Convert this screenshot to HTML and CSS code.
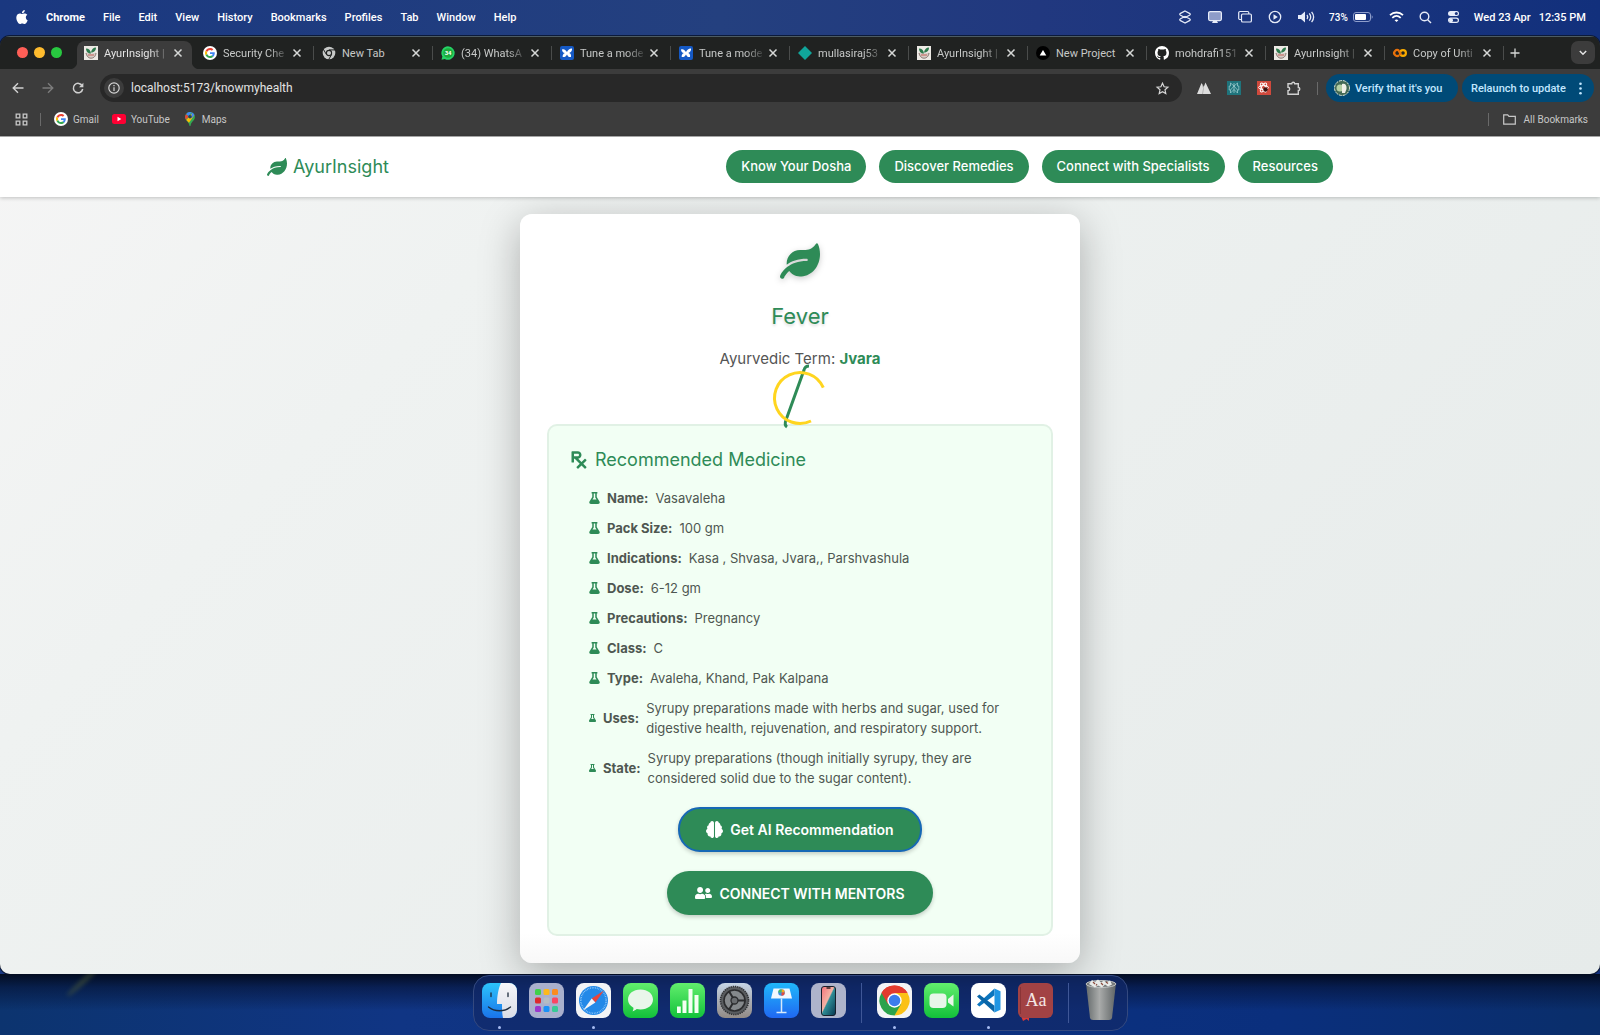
FILE: index.html
```html
<!DOCTYPE html>
<html lang="en">
<head>
<meta charset="utf-8">
<title>AyurInsight | Know My Health</title>
<link rel="stylesheet" href="styles.css">
</head>
<body>
<svg class="defs" aria-hidden="true">
  <symbol id="leaf" viewBox="0 0 576 512"><path d="M546.2 9.7c-5.6-12.5-21.6-13-28.3-1.2C486.9 62.4 431.4 96 368 96h-80C182 96 96 182 96 288c0 7 .8 13.7 1.5 20.5C161.3 262.8 253.4 224 384 224c8.8 0 16 7.2 16 16s-7.2 16-16 16C132.6 256 26 410.1 2.4 468c-6.6 16.3 1.2 34.9 17.5 41.6 16.4 6.8 35-1.1 41.8-17.3 1.5-3.6 20.9-47.9 71.9-90.6 32.4 43.9 94 85.8 174.9 77.2C465.5 467.5 576 326.7 576 154.3c0-50.2-10.8-102.2-29.8-144.6z"/></symbol>
  <symbol id="flask" viewBox="0 0 448 512"><path d="M437.2 403.5L320 215V64h8c13.3 0 24-10.7 24-24V24c0-13.3-10.7-24-24-24H120c-13.3 0-24 10.7-24 24v16c0 13.3 10.7 24 24 24h8v151L10.8 403.5C-18.5 450.6 15.3 512 70.9 512h306.2c55.7 0 89.4-61.5 60.1-108.5zM137.9 320l48.2-77.6c3.7-5.2 5.8-11.6 5.8-18.4V64h64v160c0 6.9 2.2 13.2 5.8 18.4l48.2 77.6h-172z"/></symbol>
  <symbol id="close" viewBox="0 0 10 10"><path d="M1.5 1.5l7 7M8.5 1.5l-7 7" fill="none" stroke="currentColor" stroke-width="1.5"/></symbol>
  <symbol id="google" viewBox="0 0 28 28"><circle cx="14" cy="14" r="14" fill="#fff"/><g transform="translate(4 4) scale(.417)"><path fill="#ea4335" d="M24 9.500c3.540 0 6.710 1.220 9.210 3.600l6.850-6.850C35.900 2.380 30.470 0 24 0 14.620 0 6.510 5.380 2.560 13.220l7.980 6.190C12.430 13.720 17.740 9.500 24 9.500z"/><path fill="#4285f4" d="M46.980 24.550c0-1.570-.15-3.090-.38-4.550H24v9.020h12.940c-.58 2.960-2.260 5.480-4.780 7.180l7.730 6c4.510-4.180 7.090-10.360 7.090-17.650z"/><path fill="#fbbc05" d="M10.530 28.590c-.48-1.450-.76-2.990-.76-4.590s.27-3.140.76-4.590l-7.980-6.190C.92 16.460 0 20.120 0 24c0 3.880.92 7.540 2.560 10.780l7.970-6.190z"/><path fill="#34a853" d="M24 48c6.480 0 11.930-2.130 15.890-5.810l-7.730-6c-2.150 1.450-4.920 2.300-8.160 2.300-6.260 0-11.570-4.220-13.470-9.910l-7.980 6.190C6.510 42.620 14.620 48 24 48z"/></g></symbol>
  <symbol id="ayur" viewBox="0 0 14 14"><path fill="#ece9e4" d="M0 0h14v14H0z"/><path d="M2 6.500c0 3 2 5.700 5 5.700s5-2.700 5-5.700l-4 1z" fill="#d5cbc6"/><path d="M2 7c1 4 3 5.200 5 5.200S11.500 11 12 7" fill="none" stroke="#7d6660" stroke-width=".9"/><path d="M2 2.500c3 0 4.500 1.500 5 5C4 7.500 2 5.500 2 2.500zM12 1.500c-3 0-4.500 2-5 5 3 0 5-1.500 5-5z" fill="#2d7a4c"/><path d="M4 9h6" stroke="#c0473c" stroke-width=".8"/></symbol>
  <symbol id="tune" viewBox="0 0 14 14"><rect width="14" height="14" rx="2" fill="#1559c5"/><path d="M2 3.500c2-1 3.500.3 5 2.500 1.200-2.500 3-3.800 5-3.500.3 2-.8 4-2.800 4.500 1.600.5 2.200 2 1.800 4-2 .5-3.200-.8-4-2.600-.8 1.800-2.400 3-4.300 2.600C2.500 9 3.300 7.500 5 7 3.200 6.800 2 5.500 2 3.500z" fill="#fff"/></symbol>
</svg>

<header class="menubar">
  <nav class="menus" aria-label="Application menu">
    <button aria-label="Apple menu"><svg width="12" height="14" viewBox="2 0 20 24" fill="#fff"><path d="M12.152 6.896c-.948 0-2.415-1.078-3.960-1.040-2.040.027-3.910 1.183-4.961 3.014-2.117 3.675-.546 9.103 1.519 12.090 1.013 1.454 2.208 3.090 3.792 3.039 1.520-.065 2.090-.987 3.935-.987 1.831 0 2.350.987 3.960.948 1.637-.026 2.676-1.480 3.676-2.948 1.156-1.688 1.636-3.325 1.662-3.415-.039-.013-3.182-1.221-3.220-4.857-.026-3.040 2.480-4.494 2.597-4.559-1.429-2.090-3.623-2.324-4.390-2.376-2-.156-3.675 1.090-4.610 1.090zM15.530 3.830c.843-1.012 1.400-2.427 1.245-3.830-1.207.052-2.662.805-3.532 1.818-.78.896-1.454 2.338-1.273 3.714 1.338.104 2.715-.688 3.559-1.701"/></svg></button>
    <button class="app-name">Chrome</button><button>File</button><button>Edit</button><button>View</button><button>History</button><button>Bookmarks</button><button>Profiles</button><button>Tab</button><button>Window</button><button>Help</button>
  </nav>
  <div class="status">
    <div class="status-icons wide">
      <svg width="14" height="14" viewBox="0 0 14 14"><path d="M7 1l4.500 2.300c1 .6 1 1.400 0 2L7 7.600 2.500 5.300c-1-.6-1-1.400 0-2zM7 13l-4.500-2.300c-1-.6-1-1.400 0-2L7 6.400l4.500 2.300c1 .6 1 1.400 0 2z" fill="none" stroke="#e6ebf8" stroke-width="1.300"/></svg>
      <svg width="14" height="14" viewBox="0 0 14 14"><rect x=".6" y="1.600" width="12.800" height="9" rx="1.500" fill="#8e9cc9" stroke="#e6ebf8" stroke-width="1.200"/><path d="M4 13h6l-1-2H5z" fill="#e6ebf8"/></svg>
      <svg width="14" height="14" viewBox="0 0 14 14" fill="none" stroke="#e6ebf8" stroke-width="1.200"><path d="M3.500 9.500H2A1.300 1.300 0 0 1 .7 8.200V2.800A1.300 1.300 0 0 1 2 1.500h7.500a1.300 1.300 0 0 1 1.300 1.300V4"/><rect x="3.500" y="4" width="9.900" height="8" rx="1.300"/></svg>
      <svg width="14" height="14" viewBox="0 0 14 14"><circle cx="7" cy="7" r="5.700" fill="none" stroke="#e6ebf8" stroke-width="1.300"/><path d="M5.500 4.300L9.800 7l-4.300 2.700z" fill="#e6ebf8"/></svg>
      <svg class="speaker" width="17" height="14" viewBox="0 0 17 14"><path d="M0 5h3l4-3.500v11L3 9H0z" fill="#e6ebf8"/><path d="M9 5c.9 1.200.9 2.800 0 4M11.300 3.300c1.700 2.200 1.700 5.200 0 7.400M13.600 1.800c2.500 3.200 2.500 7.200 0 10.400" fill="none" stroke="#e6ebf8" stroke-width="1.300"/></svg>
    </div>
    <div class="battery"><span>73%</span><svg width="20" height="10" viewBox="0 0 20 10"><rect x=".5" y=".5" width="17" height="9" rx="2.500" fill="none" stroke="#8f9ecb"/><rect x="2" y="2" width="11" height="6" rx="1" fill="#fff"/><path d="M18.700 3.300v3.400c1.300-.6 1.300-2.800 0-3.400z" fill="#8f9ecb"/></svg></div>
    <div class="status-icons">
      <svg width="15" height="12" viewBox="0 0 15 12" fill="none" stroke="#fff" stroke-width="1.800"><path d="M1 4.200c3.800-3.600 9.200-3.600 13 0M3.300 6.800c2.500-2.300 5.900-2.300 8.400 0"/><path d="M5.600 9.200c1.200-1 2.600-1 3.800 0L7.500 11z" fill="#fff" stroke="none"/></svg>
      <svg width="13" height="13" viewBox="0 0 13 13" fill="none" stroke="#e6ebf8" stroke-width="1.400"><circle cx="5.500" cy="5.500" r="4.300"/><path d="M8.700 8.700L12 12"/></svg>
      <svg width="13" height="14" viewBox="0 0 13 14"><rect x="1" y="1" width="11" height="5" rx="2.500" fill="#e6ebf8"/><circle cx="9.300" cy="3.500" r="1.500" fill="#1b347f"/><rect x="1.600" y="8.100" width="9.800" height="4.300" rx="2.100" fill="none" stroke="#e6ebf8" stroke-width="1.200"/><circle cx="4" cy="10.200" r="2" fill="#e6ebf8"/></svg>
    </div>
    <div class="clock"><span>Wed 23 Apr</span><time>12:35 PM</time></div>
  </div>
</header>

<div class="window">
  <div class="tabstrip">
    <div class="lights"><button class="red" aria-label="Close window"></button><button class="amber" aria-label="Minimise"></button><button class="green" aria-label="Zoom"></button></div>
    <div class="tabs">
      <div class="tab active"><svg class="fav"><use href="#ayur"/></svg><span>AyurInsight |</span><button aria-label="Close tab"><svg><use href="#close"/></svg></button></div>
      <div class="tab"><svg class="fav"><use href="#google"/></svg><span>Security Che</span><button aria-label="Close tab"><svg><use href="#close"/></svg></button></div>
      <div class="tab short"><svg class="fav" viewBox="0 0 14 14"><circle cx="7" cy="7" r="6.300" fill="#c7c9c8"/><circle cx="7" cy="7" r="2.600" fill="#c7c9c8" stroke="#202221" stroke-width="1.100"/><path d="M7 3.900h6M4.400 8.500l-3-5.200M9.600 8.500l-3 5.200" stroke="#202221" stroke-width="1"/></svg><span>New Tab</span><button aria-label="Close tab"><svg><use href="#close"/></svg></button></div>
      <div class="tab"><svg class="fav" viewBox="0 0 14 14"><path d="M7 .3a6.700 6.700 0 1 1-3.200 12.600L.5 13.700l.9-3.200A6.700 6.700 0 0 1 7 .3z" fill="#25d366"/><circle cx="7.100" cy="7" r="4.800" fill="#1cab3c"/><text x="7.100" y="9.200" font-size="6" font-weight="700" fill="#fff" text-anchor="middle">34</text></svg><span>(34) WhatsA</span><button aria-label="Close tab"><svg><use href="#close"/></svg></button></div>
      <div class="tab"><svg class="fav"><use href="#tune"/></svg><span>Tune a mode</span><button aria-label="Close tab"><svg><use href="#close"/></svg></button></div>
      <div class="tab"><svg class="fav"><use href="#tune"/></svg><span>Tune a mode</span><button aria-label="Close tab"><svg><use href="#close"/></svg></button></div>
      <div class="tab"><svg class="fav" viewBox="0 0 14 14"><path d="M7 0l7 7-7 7-7-7z" fill="#10a59b"/></svg><span>mullasiraj53</span><button aria-label="Close tab"><svg><use href="#close"/></svg></button></div>
      <div class="tab"><svg class="fav"><use href="#ayur"/></svg><span>AyurInsight |</span><button aria-label="Close tab"><svg><use href="#close"/></svg></button></div>
      <div class="tab short"><svg class="fav" viewBox="0 0 14 14"><circle cx="7" cy="7" r="7" fill="#000"/><path d="M7 4l3.300 5.500H3.700z" fill="#fff"/></svg><span>New Project</span><button aria-label="Close tab"><svg><use href="#close"/></svg></button></div>
      <div class="tab"><svg class="fav" viewBox="0 0 16 16"><path fill="#fff" d="M8 0C3.580 0 0 3.580 0 8c0 3.540 2.290 6.530 5.470 7.590.4.070.55-.17.55-.38 0-.19-.01-.82-.01-1.490-2.010.37-2.530-.49-2.690-.94-.09-.23-.48-.94-.82-1.130-.28-.15-.68-.52-.01-.53.63-.01 1.080.58 1.230.82.72 1.210 1.870.87 2.330.66.07-.52.28-.87.51-1.070-1.780-.2-3.640-.89-3.640-3.950 0-.87.31-1.590.82-2.150-.08-.2-.36-1.020.08-2.120 0 0 .67-.21 2.200.82.64-.18 1.320-.27 2-.27s1.360.09 2 .27c1.530-1.040 2.200-.82 2.200-.82.44 1.100.16 1.920.08 2.120.51.56.82 1.270.82 2.150 0 3.070-1.870 3.750-3.650 3.950.29.25.54.73.54 1.480 0 1.070-.01 1.930-.01 2.200 0 .21.15.46.55.38A8.010 8.010 0 0 0 16 8c0-4.420-3.580-8-8-8z"/></svg><span>mohdrafi151</span><button aria-label="Close tab"><svg><use href="#close"/></svg></button></div>
      <div class="tab"><svg class="fav"><use href="#ayur"/></svg><span>AyurInsight |</span><button aria-label="Close tab"><svg><use href="#close"/></svg></button></div>
      <div class="tab"><svg class="fav" viewBox="0 0 14 14" fill="none" stroke-width="2.200"><circle cx="10" cy="7" r="2.900" stroke="#f9ab00"/><path d="M6.100 4.900A2.900 2.900 0 1 0 6.100 9.100" stroke="#e8710a"/><path d="M5.900 4.800l2 4.300" stroke="#e8710a"/></svg><span>Copy of Unti</span><button aria-label="Close tab"><svg><use href="#close"/></svg></button></div>
    </div>
    <button class="new-tab" aria-label="New tab"><svg width="10" height="10" viewBox="0 0 10 10" stroke="#d5d7d6" stroke-width="1.300"><path d="M5 .5v9M.5 5h9"/></svg></button>
    <button class="tab-search" aria-label="Search tabs"><svg width="8" height="6" viewBox="0 0 8 6" fill="none" stroke="#e3e3e3" stroke-width="1.500"><path d="M.8 1L4 4.200 7.200 1"/></svg></button>
  </div>

  <div class="toolbar">
    <div class="nav-buttons">
      <button aria-label="Back"><svg width="12" height="12" viewBox="0 0 12 12" fill="none" stroke="#d0d0d0" stroke-width="1.400"><path d="M11.500 6H1.500M6 1.200L1.200 6 6 10.800"/></svg></button>
      <button aria-label="Forward"><svg width="12" height="12" viewBox="0 0 12 12" fill="none" stroke="#7b7b7b" stroke-width="1.400"><path d="M.5 6h10M6 1.200L10.800 6 6 10.800"/></svg></button>
      <button aria-label="Reload"><svg width="12" height="12" viewBox="0 0 12 12"><path d="M10.200 3.800A4.700 4.700 0 1 0 10.700 7" fill="none" stroke="#d0d0d0" stroke-width="1.500"/><path d="M11.400.8v4.400H7z" fill="#d0d0d0"/></svg></button>
    </div>
    <div class="omnibox">
      <button class="site-info" aria-label="View site information"><svg width="12" height="12" viewBox="0 0 12 12" fill="none" stroke="#d6d6d6" stroke-width="1.200"><circle cx="6" cy="6" r="5.200"/><path d="M6 5.300V9M6 3v1.300"/></svg></button>
      <input type="text" aria-label="Address" value="localhost:5173/knowmyhealth">
      <button aria-label="Bookmark this tab"><svg width="13" height="13" viewBox="0 0 13 13"><path d="M6.500 1.300l1.600 3.500 3.800.4L9 7.800l.8 3.800-3.300-1.900-3.300 1.900L4 7.800 1.100 5.200l3.800-.4z" fill="none" stroke="#d6d6d6" stroke-width="1.200"/></svg></button>
    </div>
    <div class="extensions">
      <button aria-label="Extension"><svg width="14" height="14" viewBox="0 0 14 14"><path d="M0 13L4.500 2l2.200 4L8.500 1.500 14 13z" fill="#dcdcdc"/><path d="M5.500 3.500l1 4-1 5.500" stroke="#a0a0a0" stroke-width=".7" fill="none"/></svg></button>
      <button aria-label="Perplexity"><svg width="14" height="14" viewBox="0 0 14 14"><path fill="#1f747c" d="M0 0h14v14H0z"/><path d="M7 2v10M3.500 2L7 5l3.500-3v3h1.300v4h-1.300v3L7 8.500 3.500 12V9H2.200V5h1.300zM3.500 9L7 5l3.500 4" fill="none" stroke="#a8d3d6" stroke-width=".7"/></svg></button>
      <button aria-label="React developer tools"><svg width="14" height="14" viewBox="0 0 14 14"><path fill="#d0493c" d="M0 0h14v14H0z"/><g fill="none" stroke="#fff" stroke-width="1"><ellipse cx="6.500" cy="6.500" rx="5" ry="2"/><ellipse cx="6.500" cy="6.500" rx="5" ry="2" transform="rotate(60 6.500 6.500)"/><ellipse cx="6.500" cy="6.500" rx="5" ry="2" transform="rotate(120 6.500 6.500)"/></g><ellipse cx="8.500" cy="8.500" rx="2.200" ry="2.200" fill="#3a1512"/></svg></button>
      <button aria-label="Extensions"><svg width="14" height="14" viewBox="0 0 14 14"><path d="M1 2.700h3.700a1.500 1.500 0 0 1 3 0h3.600v3.800a1.500 1.500 0 0 1 0 3v3.800H1V9.700a1.700 1.700 0 0 0 0-3.400z" fill="none" stroke="#d0d0d0" stroke-width="1.400"/></svg></button>
    </div>
    <div class="divider"></div>
    <div class="pills">
      <button class="pill"><svg width="16" height="16" viewBox="0 0 16 16"><circle cx="8" cy="8" r="7.500" fill="#446a55" stroke="#d9e3d4" stroke-dasharray="3 1"/><circle cx="6" cy="8" r="3.500" fill="#b5cfa4"/><path d="M8 4c3-1 5 1 4.500 5L11 13H8z" fill="#f0efe6"/></svg>Verify that it's you</button>
      <button class="pill update">Relaunch to update<svg width="3" height="13" viewBox="0 0 3 13" fill="#c2e7ff"><circle cx="1.500" cy="1.800" r="1.300"/><circle cx="1.500" cy="6.500" r="1.300"/><circle cx="1.500" cy="11.200" r="1.300"/></svg></button>
    </div>
  </div>

  <div class="bookmarks">
    <button aria-label="Apps"><svg width="13" height="13" viewBox="0 0 13 13" fill="none" stroke="#c8c8c8" stroke-width="1.300"><path d="M1.200 1.200h3.600v3.600H1.200zM8.200 1.200h3.600v3.600H8.200zM1.200 8.200h3.600v3.600H1.200zM8.200 8.200h3.600v3.600H8.200z"/></svg></button>
    <div class="divider"></div>
    <a href="#"><svg width="14" height="14"><use href="#google"/></svg>Gmail</a>
    <a href="#"><svg width="14" height="10" viewBox="0 0 14 10"><rect width="14" height="10" rx="2.500" fill="#f03"/><path d="M5.500 2.800L9.300 5 5.500 7.200z" fill="#fff"/></svg>YouTube</a>
    <a href="#" class="maps"><svg width="10" height="14" viewBox="0 0 10 14"><path d="M5 0a4.900 4.900 0 0 0-4.900 5c0 3.500 3.700 4.500 4.300 8.400.1.700 1.100.7 1.200 0C6.200 9.500 9.900 8.500 9.900 5A4.900 4.900 0 0 0 5 0z" fill="#34a853"/><path d="M1 2.200A4.900 4.900 0 0 1 6.500.3L3.500 4z" fill="#4285f4"/><path d="M1 2.200L3.600 4.400 1 7.700C-.2 6-.3 4 1 2.200z" fill="#ea4335"/><path d="M1.300 8.100l5.200-6 2.900 1L4 10.800z" fill="#fbbc04"/><path d="M6.500.3A5 5 0 0 1 9.400 3L6.500 6.500z" fill="#4285f4"/><circle cx="5" cy="4.800" r="1.800" fill="#24405c"/></svg>Maps</a>
    <div class="all"><div class="divider"></div><a href="#"><svg width="13" height="11" viewBox="0 0 13 11"><path d="M.7.900h4l1.300 1.500h6.300v7.700H.7z" fill="none" stroke="#c8c8c8" stroke-width="1.200"/></svg>All Bookmarks</a></div>
  </div>

  <div class="page">
    <header class="site-header">
      <div class="site-inner">
        <a class="brand" href="#"><svg width="20" height="18"><use href="#leaf"/></svg>AyurInsight</a>
        <nav class="site-nav"><a href="#">Know Your Dosha</a><a href="#">Discover Remedies</a><a href="#">Connect with Specialists</a><a href="#">Resources</a></nav>
      </div>
    </header>
    <main>
      <article class="card">
        <svg class="card-leaf" width="40" height="36"><use href="#leaf"/></svg>
        <h1>Fever</h1>
        <p class="term">Ayurvedic Term: <strong>Jvara</strong></p>
        <svg class="spinner" width="56" height="56" viewBox="0 0 56 56" fill="none"><path d="M37-2Q33-2 32 2L14 52Q12 57 15 59" stroke="#2e8b57" stroke-width="3"/><path d="M51.300 19.600A25.500 25.500 0 1 0 39 53" stroke="#ffd51f" stroke-width="3"/></svg>
        <section class="medicine">
          <h2><svg width="16" height="20" viewBox="0 0 384 512"><path d="M301.260 352l78.060-78.060c6.250-6.250 6.250-16.380 0-22.630l-22.630-22.630c-6.250-6.250-16.380-6.250-22.630 0L256 306.740l-83.960-83.960C219.310 216.800 256 176.890 256 128c0-53.020-42.980-96-96-96H16C7.160 32 0 39.160 0 48v256c0 8.840 7.160 16 16 16h32c8.840 0 16-7.160 16-16v-80h18.750l128 128-78.060 78.060c-6.250 6.250-6.250 16.380 0 22.630l22.630 22.630c6.250 6.250 16.380 6.250 22.630 0L256 397.250l78.060 78.060c6.250 6.250 16.380 6.250 22.630 0l22.630-22.630c6.250-6.250 6.250-16.380 0-22.630L301.260 352zM64 96h96c17.640 0 32 14.360 32 32s-14.360 32-32 32H64V96z"/></svg>Recommended Medicine</h2>
          <ul>
            <li><svg><use href="#flask"/></svg><strong>Name:</strong><span>Vasavaleha</span></li>
            <li><svg><use href="#flask"/></svg><strong>Pack Size:</strong><span>100 gm</span></li>
            <li><svg><use href="#flask"/></svg><strong>Indications:</strong><span>Kasa , Shvasa, Jvara,, Parshvashula</span></li>
            <li><svg><use href="#flask"/></svg><strong>Dose:</strong><span>6-12 gm</span></li>
            <li><svg><use href="#flask"/></svg><strong>Precautions:</strong><span>Pregnancy</span></li>
            <li><svg><use href="#flask"/></svg><strong>Class:</strong><span>C</span></li>
            <li><svg><use href="#flask"/></svg><strong>Type:</strong><span>Avaleha, Khand, Pak Kalpana</span></li>
            <li class="long"><svg><use href="#flask"/></svg><strong>Uses:</strong><span>Syrupy preparations made with herbs and sugar, used for digestive health, rejuvenation, and respiratory support.</span></li>
            <li class="long"><svg><use href="#flask"/></svg><strong>State:</strong><span>Syrupy preparations (though initially syrupy, they are considered solid due to the sugar content).</span></li>
          </ul>
          <div class="actions">
            <button class="focused"><svg width="17" height="17" viewBox="0 0 512 512"><path d="M184 0c30.900 0 56 25.100 56 56V456c0 30.900-25.100 56-56 56c-28.900 0-52.700-21.900-55.700-50.100c-5.200 1.400-10.700 2.100-16.300 2.100c-35.300 0-64-28.700-64-64c0-7.400 1.300-14.600 3.600-21.200C21.400 367.400 0 338.200 0 304c0-31.900 18.700-59.500 45.800-72.300C37.100 220.800 32 207 32 192c0-30.700 21.600-56.300 50.400-62.600C80.800 123.900 80 118 80 112c0-29.900 20.600-55.100 48.300-62.100C131.300 21.900 155.100 0 184 0zM328 0c28.900 0 52.600 21.900 55.700 49.900c27.800 7 48.300 32.100 48.300 62.100c0 6-.8 11.900-2.400 17.400c28.800 6.200 50.400 31.900 50.400 62.600c0 15-5.100 28.800-13.800 39.700C493.300 244.500 512 272.100 512 304c0 34.200-21.400 63.400-51.600 74.800c2.300 6.600 3.600 13.800 3.600 21.200c0 35.300-28.700 64-64 64c-5.600 0-11.100-.7-16.300-2.100c-3 28.200-26.800 50.100-55.700 50.100c-30.900 0-56-25.100-56-56V56c0-30.900 25.100-56 56-56z"/></svg>Get AI Recommendation</button>
            <button><svg width="17" height="14" viewBox="0 0 640 512"><path d="M192 256c61.900 0 112-50.100 112-112S253.900 32 192 32 80 82.100 80 144s50.100 112 112 112zm76.800 32h-8.300c-20.800 10-43.900 16-68.500 16s-47.600-6-68.500-16h-8.300C51.600 288 0 339.600 0 403.200V432c0 26.500 21.500 48 48 48h288c26.500 0 48-21.500 48-48v-28.800c0-63.600-51.600-115.200-115.200-115.200zM480 256c53 0 96-43 96-96s-43-96-96-96-96 43-96 96 43 96 96 96zm48 32h-3.800c-13.900 4.800-28.600 8-44.200 8s-30.300-3.200-44.200-8H432c-20.400 0-39.200 5.900-55.700 15.400 24.400 26.300 39.700 61.200 39.700 99.800v38.400c0 2.200-.5 4.300-.6 6.400H592c26.500 0 48-21.500 48-48 0-61.900-50.100-112-112-112z"/></svg>CONNECT WITH MENTORS</button>
          </div>
        </section>
      </article>
    </main>
  </div>
</div>

<footer class="desktop">
  <div class="streak"></div>
  <div class="dock">
    <div class="apps">
      <button class="running" aria-label="Finder"><svg viewBox="0 0 35 35"><defs><linearGradient id="gf" x2="0" y2="1"><stop stop-color="#2cc4fb"/><stop offset="1" stop-color="#1a73ea"/></linearGradient><linearGradient id="gw" x2="0" y2="1"><stop stop-color="#f6f6fa"/><stop offset="1" stop-color="#d9dce6"/></linearGradient></defs><rect width="35" height="35" rx="8" fill="url(#gf)"/><path d="M19 0h8a8 8 0 0 1 8 8v19a8 8 0 0 1-8 8h-6c-.8-4-1-8-1-14h-5C15 13 16.500 5 19 0z" fill="url(#gw)"/><path d="M9 10v3.500M26 10v3.500M6.500 24c6 5 16 5 22 0" fill="none" stroke="#1d2b3d" stroke-width="1.300" stroke-linecap="round"/></svg></button>
      <button aria-label="Launchpad"><svg viewBox="0 0 35 35"><rect width="35" height="35" rx="8" fill="#a9b0cd"/><rect x="6" y="6" width="6" height="6" rx="1.500" fill="#41d04b"/><rect x="14.500" y="6" width="6" height="6" rx="1.500" fill="#fdb91a"/><rect x="23" y="6" width="6" height="6" rx="1.500" fill="#fb8b1e"/><rect x="6" y="14.500" width="6" height="6" rx="1.500" fill="#dd2a2e"/><rect x="14.500" y="14.500" width="6" height="6" rx="1.500" fill="#b5bcc2"/><rect x="23" y="14.500" width="6" height="6" rx="1.500" fill="#fb4562"/><rect x="6" y="23" width="6" height="6" rx="1.500" fill="#9a39cd"/><rect x="14.500" y="23" width="6" height="6" rx="1.500" fill="#1a91f7"/><rect x="23" y="23" width="6" height="6" rx="1.500" fill="#37ca96"/></svg></button>
      <button class="running" aria-label="Safari"><svg viewBox="0 0 35 35"><rect width="35" height="35" rx="8" fill="#f3f4f6"/><circle cx="17.500" cy="17.500" r="14.500" fill="#2389e8"/><circle cx="17.500" cy="17.500" r="12.700" fill="none" stroke="#9fd0fa" stroke-width="1.500" stroke-dasharray=".7 1"/><path d="M28 7.500L15.700 15.600l3.700 3.800z" fill="#e8453c"/><path d="M7 27.500l8.700-11.900 3.700 3.800z" fill="#f3f5f8"/></svg></button>
      <button aria-label="Messages"><svg viewBox="0 0 35 35"><defs><linearGradient id="gg" x2="0" y2="1"><stop stop-color="#62ee6d"/><stop offset="1" stop-color="#12c13a"/></linearGradient></defs><rect width="35" height="35" rx="8" fill="url(#gg)"/><path d="M17.500 6.500c7.200 0 12.500 4.300 12.500 10s-5.300 10-12.500 10c-1.500 0-2.700-.1-3.800-.4-1 .9-2.700 2-4.300 2.200.7-.8 1.200-2.300 1-3.600C7 22.800 5 20 5 16.500c0-5.700 5.300-10 12.500-10z" fill="#e9f6ea"/></svg></button>
      <button aria-label="Numbers"><svg viewBox="0 0 35 35"><rect width="35" height="35" rx="8" fill="url(#gg)"/><path d="M7 23.500h3.800V30H7zM12.500 17.500h4V30h-4zM18.500 6h4v24h-4zM24.500 12h4v18h-4z" fill="#f3fff2"/></svg></button>
      <button aria-label="System Settings"><svg viewBox="0 0 35 35"><defs><linearGradient id="gs" x2="0" y2="1"><stop stop-color="#c6d5e6"/><stop offset="1" stop-color="#918a85"/></linearGradient></defs><rect width="35" height="35" rx="8" fill="url(#gs)"/><circle cx="17.500" cy="17.500" r="14" fill="#5a5d60" stroke="#303235" stroke-width="1.600" stroke-dasharray="1.300 .9"/><circle cx="17.500" cy="17.500" r="10.500" fill="#85898c" stroke="#2b2c2e" stroke-width="1.600"/><circle cx="17.500" cy="17.500" r="3.500" fill="#6a6d70" stroke="#2b2c2e" stroke-width="1.300"/><path d="M21 17.500h7.500M15.700 14.500L12 8.200M15.700 20.500L12 26.800" stroke="#2b2c2e" stroke-width="2"/></svg></button>
      <button aria-label="Keynote"><svg viewBox="0 0 35 35"><defs><linearGradient id="gk" x2="0" y2="1"><stop stop-color="#20b8fb"/><stop offset="1" stop-color="#1f67f2"/></linearGradient></defs><rect width="35" height="35" rx="8" fill="url(#gk)"/><path d="M9.500 5.500h16L28 15.500H7z" fill="#f3f8fd"/><path d="M17.500 15.500V29M12.500 29.500h10" stroke="#d7e9fb" stroke-width="1.500"/><circle cx="17.500" cy="9.500" r="3.300" fill="#3d8ee8"/><path d="M17.500 9.500V6.200a3.300 3.300 0 0 1 3.200 3.300z" fill="#f6a623"/><path d="M17.500 9.500h3.200a3.300 3.300 0 0 1-3.200 3.300z" fill="#e64a3b"/><path d="M17.500 9.500v-3.300a3.300 3.300 0 0 0-3.200 3.300z" fill="#4abf5a"/></svg></button>
      <button aria-label="iPhone Mirroring"><svg viewBox="0 0 35 35"><defs><linearGradient id="gp" x1="0" y1="0" x2="1" y2="1"><stop stop-color="#f4737a"/><stop offset=".45" stop-color="#f3b3a5"/><stop offset=".5" stop-color="#2f8d96"/><stop offset="1" stop-color="#07364f"/></linearGradient></defs><rect width="35" height="35" rx="8" fill="#aeb4cb"/><rect x="10.500" y="3.500" width="14" height="29" rx="2.500" fill="url(#gp)" stroke="#17202c"/><path d="M15.500 5h4" stroke="#111" stroke-width="1.300"/></svg></button>
    </div>
    <div class="dock-line"></div>
    <div class="apps">
      <button class="running" aria-label="Chrome"><svg viewBox="0 0 35 35"><rect width="35" height="35" rx="8" fill="#f3f4f6"/><path d="M17.500 17.500L4.500 10A15 15 0 0 1 30.500 10z" fill="#e33b2e"/><path d="M17.500 17.500L4.500 10a15 15 0 0 0 13 22.500z" fill="#2ba24c"/><path d="M17.500 17.500l13-7.500a15 15 0 0 1-13 22.500z" fill="#fbc116"/><path d="M17.500 10h13L24 21.300z" fill="#fbc116"/><path d="M17.500 10.100h13a15 15 0 0 0-26-.1l6.600 11.300z" fill="#e33b2e"/><path d="M24 21.200L17.500 32.500 11 21.200z" fill="#2ba24c"/><circle cx="17.500" cy="17.500" r="7.200" fill="#fff"/><circle cx="17.500" cy="17.500" r="5.800" fill="#3b7ded"/></svg></button>
      <button aria-label="FaceTime"><svg viewBox="0 0 35 35"><rect width="35" height="35" rx="8" fill="url(#gg)"/><rect x="5.500" y="10.500" width="17" height="14.500" rx="4" fill="#e8f6e9"/><path d="M24 16l5.500-4.500v12L24 19.500z" fill="#e8f6e9"/></svg></button>
      <button class="running" aria-label="Visual Studio Code"><svg viewBox="0 0 35 35"><rect width="35" height="35" rx="8" fill="#fff"/><path d="M23.500 5.500L6 21.500l2.300 2 15.200-11.300z" fill="#0b74bd"/><path d="M23.500 29.500L6 13.500l2.300-2 15.200 11.300z" fill="#0a66a8"/><path d="M23.500 5.500l6 2.800v18.400l-6 2.800z" fill="#2196e3"/></svg></button>
      <button aria-label="Dictionary"><svg viewBox="0 0 35 35"><path d="M3 33h8v5l-2.500-2L5 38z" fill="#d83a3a"/><rect width="35" height="35" rx="6" fill="#a24244"/><path d="M2.500 4v27" stroke="#8a3437"/><text x="18" y="23" font-family="Liberation Serif, serif" font-size="18" fill="#f4e6e4" text-anchor="middle">Aa</text></svg></button>
    </div>
    <div class="dock-line"></div>
    <div class="apps">
      <button aria-label="Trash"><svg viewBox="0 0 35 35"><defs><linearGradient id="gt"><stop stop-color="#646a6b"/><stop offset=".45" stop-color="#a9abaa"/><stop offset="1" stop-color="#5f6465"/></linearGradient></defs><path d="M2 0h30l-4 35q-.4 2-3 2H9q-2.600 0-3-2z" fill="url(#gt)"/><ellipse cx="17" cy="1" rx="15" ry="3.500" fill="#777b7c" stroke="#bfc2c2"/><path d="M5 1l3-4 3 2 3-2.500 3 3 3-2 2 2 4-2 2 4-4 2-3-2-3 3-4-2-3 2z" fill="#e8ebe9"/><path d="M9-1l2 2M17 0l2 2M22-1l2 1.500M13 1l-1 1.500" stroke="#8a4a3d" stroke-width="1.200"/></svg></button>
    </div>
  </div>
</footer>
</body>
</html>
```
FILE: styles.css
```css
* { box-sizing: border-box; }

body {
  margin: 0;
  min-height: 100vh;
  display: flex;
  flex-direction: column;
  font-family: Roboto, "Liberation Sans", sans-serif;
  font-size: 11px;
  color: #fff;
  background: linear-gradient(90deg, #1a3880 0%, #24407f 45%, #21387f 65%, #12307c 100%);
}

button, input {
  font: inherit;
  color: inherit;
  border: 0;
  padding: 0;
  margin: 0;
  background: none;
}

a { color: inherit; text-decoration: none; }
svg { display: block; flex: none; overflow: visible; }
.defs { position: absolute; width: 0; height: 0; }

/* System menu bar */
.menubar {
  height: 36px;
  padding: 0 14px 2px 16px;
  display: flex;
  justify-content: space-between;
  align-items: center;
  font-weight: 500;
}
.menus { display: flex; align-items: center; gap: 18px; }
.menus .app-name { font-weight: 700; }
.status { display: flex; align-items: center; gap: 14px; }
.status-icons { display: flex; align-items: center; gap: 15px; }
.status-icons.wide { gap: 16px; }
.battery { display: flex; align-items: center; gap: 5px; font-size: 10px; margin-right: 2px; }
.clock { display: flex; gap: 8px; }

/* Browser window */
.window {
  flex: 1;
  display: flex;
  flex-direction: column;
  position: relative;
  border-radius: 10px;
  background: #3c3c3c;
  overflow: hidden;
  box-shadow: 0 0 0 1px #0b1a3a;
}
.tabstrip {
  height: 33px;
  display: flex;
  align-items: flex-end;
  background: #202221;
  border-top: 1px solid #4c5b63;
}
.lights { display: flex; gap: 6px; padding: 0 15px 11px 17px; }
.lights button { width: 11px; height: 11px; border-radius: 50%; }
.lights .red { background: #ff5f57; }
.lights .amber { background: #febc2e; }
.lights .green { background: #28c840; }
.tabs { display: flex; gap: 4px; min-width: 0; }
.tab {
  flex: 0 1 115px;
  width: 115px;
  min-width: 0;
  height: 28px;
  padding: 0 9px 4px 7px;
  display: flex;
  align-items: center;
  position: relative;
  color: #c7c9c8;
}
.tab .fav { width: 14px; height: 14px; }
.tab span {
  flex: 1;
  min-width: 0;
  margin-left: 6px;
  overflow: hidden;
  white-space: nowrap;
  -webkit-mask-image: linear-gradient(90deg, #000 70%, rgba(0, 0, 0, .1));
  mask-image: linear-gradient(90deg, #000 70%, rgba(0, 0, 0, .1));
}
.tab.short span { -webkit-mask-image: none; mask-image: none; }
.tab button { margin-left: 4px; color: #d5d7d6; }
.tab button svg { width: 10px; height: 10px; }
.tab:not(.active)::after {
  content: "";
  position: absolute;
  right: -3px;
  top: 5px;
  width: 1px;
  height: 14px;
  background: #4a4c4b;
}
.tab.active { background: #3c3c3c; border-radius: 8px 8px 0 0; color: #e3e3e3; }
.tab.active::before, .tab.active::after {
  content: "";
  position: absolute;
  bottom: 0;
  width: 8px;
  height: 8px;
}
.tab.active::before { left: -8px; background: radial-gradient(circle at 0 0, transparent 8px, #3c3c3c 9px); }
.tab.active::after { right: -8px; background: radial-gradient(circle at 100% 0, transparent 8px, #3c3c3c 9px); }
.new-tab { padding: 0 8px 11px 9px; }
.tab-search {
  margin: 0 5px 5px auto;
  width: 24px;
  height: 23px;
  border-radius: 7px;
  background: #3c3c3c;
  display: grid;
  place-items: center;
}

.toolbar { display: flex; align-items: center; padding: 5px 6px 3px 10px; }
.nav-buttons { display: flex; gap: 14px; margin-right: 14px; }
.nav-buttons button { width: 16px; height: 16px; display: grid; place-items: center; }
.omnibox {
  flex: 1;
  height: 28px;
  padding: 0 13px 0 4px;
  border-radius: 14px;
  background: #282828;
  display: flex;
  align-items: center;
  gap: 7px;
}
.site-info {
  width: 20px;
  height: 20px;
  border-radius: 50%;
  background: #3c3c3c;
  display: grid;
  place-items: center;
}
.omnibox input { flex: 1; min-width: 0; font-size: 12px; color: #e3e3e3; outline: 0; }
.extensions { display: flex; gap: 16px; margin-left: 15px; }
.divider { width: 1px; height: 13px; background: #6a6a6a; }
.toolbar .divider { margin: 0 8px 0 16px; }
.pills { display: flex; gap: 4px; }
.pill {
  width: 132px;
  height: 28px;
  padding: 0 8px;
  border-radius: 14px;
  background: #004a77;
  color: #c2e7ff;
  font-weight: 500;
  display: flex;
  align-items: center;
  gap: 5px;
  white-space: nowrap;
}
.pill.update { justify-content: space-between; padding: 0 12px 0 9px; }

.bookmarks {
  height: 31px;
  padding: 0 12px 3px 15px;
  display: flex;
  align-items: center;
  font-size: 10px;
  color: #c7c7c7;
}
.bookmarks a { display: flex; align-items: center; gap: 5px; margin-left: 13px; }
.bookmarks > .divider { margin-left: 12px; }
.bookmarks .maps { gap: 7px; margin-left: 15px; }
.all { margin-left: auto; display: flex; align-items: center; }
.bookmarks .all a { gap: 8px; margin-left: 14px; }

/* Web page */
.page {
  flex: 1;
  font-family: Inter, "Liberation Sans", sans-serif;
  background: linear-gradient(135deg, #f5f5f5 0%, #eff2f1 25%, #e6ebea 100%);
  display: flex;
  flex-direction: column;
}
.site-header {
  background: #fff;
  border-top: 1px solid #a5a5a5;
  box-shadow: 0 1px 4px rgba(0, 0, 0, .22);
  position: relative;
}
.site-inner {
  max-width: 1066px;
  margin: 0 auto;
  padding: 13px 0 14px;
  display: flex;
  justify-content: space-between;
  align-items: center;
}
.brand { display: flex; align-items: center; gap: 6px; font-size: 18px; color: #2e8b57; fill: #2e8b57; }
.site-nav { display: flex; gap: 13px; }
.site-nav a {
  height: 33px;
  padding: 0 15px;
  border-radius: 17px;
  background: #2e8b57;
  color: #fff;
  font-size: 13px;
  line-height: 33px;
  font-weight: 500;
}
main { flex: 1; padding: 17px 20px 10px; overflow: hidden; }
.card {
  max-width: 560px;
  margin: 0 auto;
  padding: 29px 27px 27px;
  border-radius: 12px;
  background: linear-gradient(#fff 96%, #f8f8f8);
  box-shadow: 0 10px 40px rgba(0, 0, 0, .28);
  display: flex;
  flex-direction: column;
  align-items: center;
}
.card-leaf { fill: #2e8b57; filter: drop-shadow(0 2px 3px rgba(0, 0, 0, .2)); }
h1 {
  margin: 22px 0 17px;
  font-size: 22px;
  line-height: 30px;
  font-weight: 400;
  color: #2e8b57;
  text-shadow: 0 2px 3px rgba(0, 0, 0, .15);
}
.term { margin: 0; font-size: 15px; line-height: 22px; color: #555; }
.term strong { color: #2e8b57; font-weight: 700; }
.spinner { position: relative; z-index: 1; margin-top: -2px; }
.medicine {
  align-self: stretch;
  padding: 20px 22px 19px;
  border: 2px solid #e1f1e5;
  border-radius: 10px;
  background: #f2fff4;
}
h2 {
  margin: 0 0 14px;
  display: flex;
  align-items: center;
  gap: 8px;
  font-size: 18px;
  line-height: 28px;
  font-weight: 400;
  color: #2e8b57;
  fill: #2e8b57;
}
ul { list-style: none; margin: 0; padding: 0 0 0 18px; display: grid; gap: 10px; }
li { display: flex; align-items: center; font-size: 13px; line-height: 20px; color: #4f5751; }
li svg { width: 11px; height: 12px; margin-right: 7px; fill: #2e8b57; }
li strong { font-weight: 700; margin-right: 7px; }
.long svg { width: 7px; height: 8px; }
.actions { margin-top: 19px; display: flex; flex-direction: column; align-items: center; gap: 19px; }
.actions button {
  height: 44px;
  padding: 0 28px;
  border-radius: 22px;
  background: #2e8b57;
  color: #fff;
  fill: #fff;
  font-size: 14px;
  font-weight: 600;
  display: flex;
  align-items: center;
  gap: 7px;
  box-shadow: 0 2px 4px rgba(0, 0, 0, .2);
}
.actions .focused { height: 45px; padding: 0 26px; border: 2px solid #1668b5; }

/* Desktop and dock */
.desktop {
  display: flex;
  justify-content: center;
  padding: 1px 0 4px;
  position: relative;
  overflow: hidden;
  background: linear-gradient(rgba(2, 8, 24, .9), rgba(4, 14, 45, .55) 22%, transparent 60%), linear-gradient(90deg, #0c346f, #103584 25%, #0a2f7d 80%, #0a2e6a);
}
.streak {
  position: absolute;
  left: 62px;
  top: 6px;
  width: 40px;
  height: 5px;
  border-radius: 50%;
  background: #546238;
  opacity: .5;
  filter: blur(2px);
  transform: rotate(-42deg);
}
.dock {
  position: relative;
  height: 56px;
  padding: 7px 8px 0;
  display: flex;
  gap: 15px;
  border: 1px solid #34497f;
  border-radius: 16px;
  background: rgba(18, 42, 105, .75);
}
.apps { display: flex; gap: 12px; }
.apps button { width: 35px; height: 35px; position: relative; }
.apps svg { width: 35px; height: 35px; }
.apps .running::after {
  content: "";
  position: absolute;
  left: 16px;
  bottom: -11px;
  width: 3px;
  height: 3px;
  border-radius: 50%;
  background: #a8bcf2;
}
.dock-line { width: 1px; height: 40px; background: #3f5797; }
```
